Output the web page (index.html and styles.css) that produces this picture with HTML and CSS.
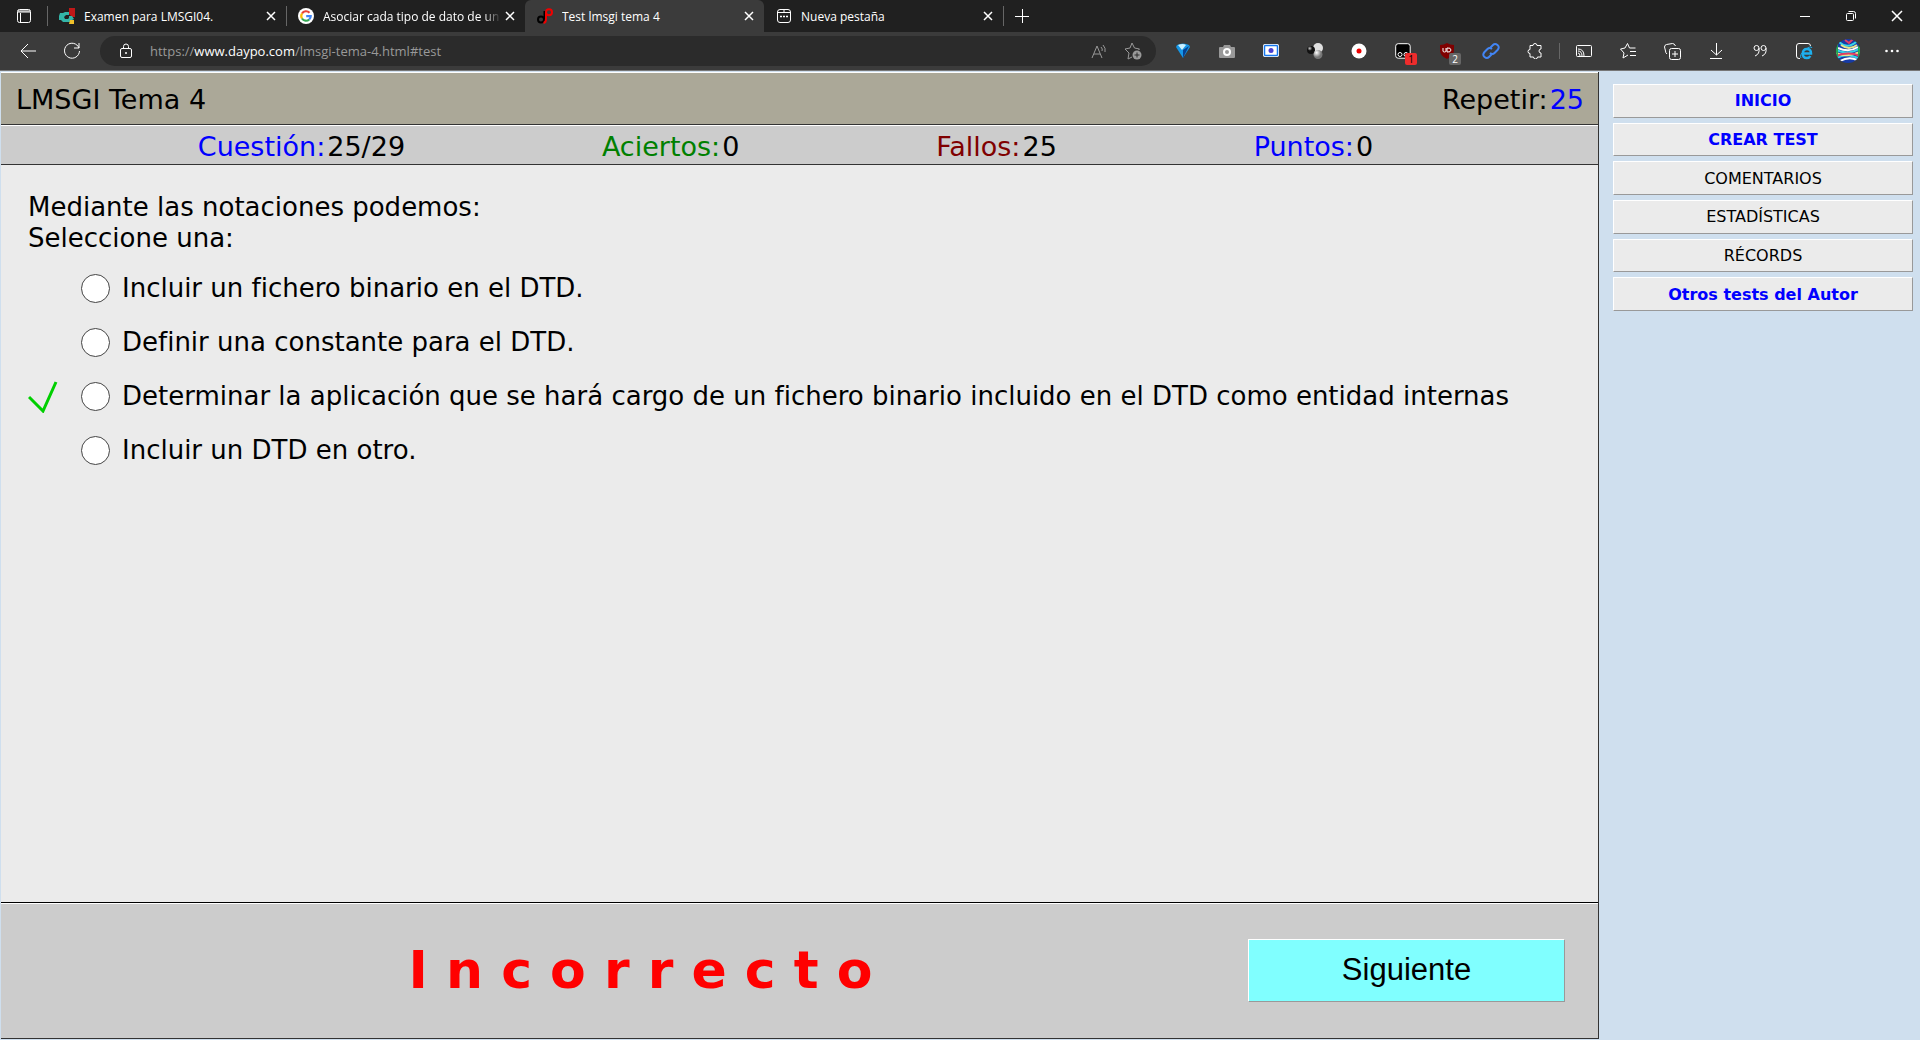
FILE: index.html
```html
<!DOCTYPE html>
<html lang="es">
<head>
<meta charset="utf-8">
<title>Test lmsgi tema 4</title>
<link rel="stylesheet" href="styles.css">
</head>
<body>
<header class="browser">
  <div class="tabstrip">
    <button class="tab-menu" aria-label="Menú de pestañas"><svg width="16" height="16" viewBox="0 0 16 16"><rect x="1.500" y="1.500" width="13" height="13" rx="2" class="line"/><path d="M2 3h12M2 4h12" class="line"/><path d="M4.500 5v9" class="line"/></svg></button>
    <div class="tab">
      <svg class="favicon" width="16" height="16" viewBox="0 0 16 16"><path fill="#c01818" d="M10 0h6v9h-3L10 6z"/><path fill="#33b5a8" d="M1 5h3l2-1h4v3H7l-2 2 1 2h3l1-1V8h3l2 3-2 1-2 2H4l-2-2H0V8z"/><path fill="#f0c02a" d="M11 12h4v4h-5z"/></svg>
      <span class="tab-title">Examen para LMSGI04.</span>
      <button class="close" aria-label="Cerrar"><svg width="10" height="10" viewBox="0 0 10 10"><path d="M1 1l8 8M9 1L1 9" class="line bold"/></svg></button>
    </div>
    <div class="tab">
      <svg class="favicon" width="16" height="16" viewBox="0 0 16 16"><circle cx="8" cy="8" r="8" fill="#fff"/><g fill="none" stroke-width="2.200"><path stroke="#ea4335" d="M4 5.500A4.700 4.700 0 0 1 11.500 4.800"/><path stroke="#fbbc05" d="M4 5.500a4.700 4.700 0 0 0 0 5"/><path stroke="#34a853" d="M4 10.500a4.700 4.700 0 0 0 7.200 1"/><path stroke="#4285f4" d="M11.200 11.500a4.700 4.700 0 0 0 1.500-3.300H8.200"/></g></svg>
      <span class="tab-title fade">Asociar cada tipo de dato de un c</span>
      <button class="close" aria-label="Cerrar"><svg width="10" height="10" viewBox="0 0 10 10"><path d="M1 1l8 8M9 1L1 9" class="line bold"/></svg></button>
    </div>
    <div class="tab active">
      <svg class="favicon" width="16" height="16" viewBox="0 0 16 16"><g fill="none" stroke-width="2"><circle cx="4" cy="11.500" r="3" stroke="#000"/><path stroke="#000" d="M7.500 3v10"/><path stroke="#f00000" d="M6.500 15q2.500-.5 2.500-4V4"/><circle cx="12" cy="4.200" r="3" stroke="#f00000"/></g></svg>
      <span class="tab-title">Test lmsgi tema 4</span>
      <button class="close" aria-label="Cerrar"><svg width="10" height="10" viewBox="0 0 10 10"><path d="M1 1l8 8M9 1L1 9" class="line bold"/></svg></button>
    </div>
    <div class="tab">
      <svg class="favicon" width="16" height="16" viewBox="0 0 16 16"><rect x="1.500" y="1.500" width="13" height="13" rx="2.500" class="line"/><path d="M2 4.500h12M8 4.500V2" class="line"/><path d="M4 8.500h2M7 8.500h2M10 8.500h2" class="line bold"/></svg>
      <span class="tab-title">Nueva pestaña</span>
      <button class="close" aria-label="Cerrar"><svg width="10" height="10" viewBox="0 0 10 10"><path d="M1 1l8 8M9 1L1 9" class="line bold"/></svg></button>
    </div>
    <button class="new-tab" aria-label="Nueva pestaña"><svg width="14" height="14" viewBox="0 0 14 14"><path d="M7.500 0v14M0 7.500h14" class="line"/></svg></button>
    <div class="window-controls">
      <button aria-label="Minimizar"><svg width="12" height="12" viewBox="0 0 12 12"><path d="M1 6.500h10" class="line"/></svg></button>
      <button aria-label="Restaurar"><svg width="12" height="12" viewBox="0 0 12 12"><rect x="1.500" y="3.500" width="7" height="7" rx="1" class="line"/><path d="M3.500 1.500h5q2 0 2 2v5" class="line"/></svg></button>
      <button aria-label="Cerrar ventana"><svg width="12" height="12" viewBox="0 0 12 12"><path d="M1 1l10 10M11 1L1 11" class="line bold"/></svg></button>
    </div>
  </div>
  <div class="toolbar">
    <button class="tool" aria-label="Atrás"><svg width="18" height="18" viewBox="0 0 18 18"><path d="M17 9H2M9 2L2 9l7 7" class="line"/></svg></button>
    <button class="tool" aria-label="Actualizar"><svg width="18" height="18" viewBox="0 0 18 18"><path d="M16 6A7.500 7.500 0 1 0 16.500 9M16 1v5h-5" class="line"/></svg></button>
    <div class="address">
      <svg width="14" height="16" viewBox="0 0 14 16"><rect x="1.500" y="5.500" width="11" height="9" rx="1.500" class="line"/><path d="M4.500 5V3.500a2.500 2.500 0 0 1 5 0V5" class="line"/><circle cx="7" cy="10" r="1" fill="#fff"/></svg>
      <a class="url" href="#test">https://<b>www.daypo.com</b>/lmsgi-tema-4.html#test</a>
      <button aria-label="Leer en voz alta"><svg width="16" height="16" viewBox="0 0 16 16"><path d="M1 15L6 3l5 12M3 11h6M10 4q2 2 1 4M12 2q3 3 2 7" class="line dim"/></svg></button>
      <button aria-label="Agregar a favoritos"><svg width="18" height="18" viewBox="0 0 18 18"><path d="M8 15l-4 2 1-6-4-4 5-1 2-5 2.500 5 5 1-1 1" class="line dim"/><circle cx="13" cy="13" r="4.500" fill="#999"/><path d="M13 10.500v5M10.500 13h5" stroke="#2b2b2b"/></svg></button>
    </div>
    <button class="tool" aria-label="Diamante"><svg width="16" height="16" viewBox="0 0 16 16"><path d="M2 2q6-3 12 0l1 2-7 11L1 4z" fill="#1597e8"/><path d="M3 2q5-2 8 0L7 7z" fill="#c9f0ff"/><path d="M8 7l6-4-6 12z" fill="#07408f"/></svg></button>
    <button class="tool" aria-label="Captura"><svg width="16" height="16" viewBox="0 0 16 16"><path fill="#999" d="M1 4h3l1-2h6l1 2h3q1 0 1 1v9q0 1-1 1H1q-1 0-1-1V5q0-1 1-1z"/><circle cx="8" cy="9" r="3" fill="#999" stroke="#fff" stroke-width="2"/></svg></button>
    <button class="tool" aria-label="Grabar pantalla"><svg width="16" height="16" viewBox="0 0 16 16"><rect y="1" width="16" height="13" rx="2" fill="#fff"/><rect x="1.500" y="2.500" width="13" height="10" rx="1" fill="#fff" stroke="#1677ee" stroke-width="1.500"/><circle cx="8" cy="7.500" r="2.500" fill="#4a3fd0"/></svg></button>
    <button class="tool" aria-label="Esferas"><svg width="16" height="16" viewBox="0 0 16 16"><defs><radialGradient id="ball" cx=".35" cy=".3"><stop offset="0" stop-color="#fff"/><stop offset="1" stop-color="#777"/></radialGradient><radialGradient id="dark" cx=".35" cy=".3"><stop offset="0" stop-color="#ccc"/><stop offset=".6" stop-color="#111"/></radialGradient></defs><circle cx="11" cy="5" r="5" fill="#e0e0e0"/><circle cx="4" cy="7" r="4" fill="url(#dark)"/><circle cx="11" cy="11.500" r="4.500" fill="url(#ball)"/></svg></button>
    <button class="tool" aria-label="Grabadora"><svg width="16" height="16" viewBox="0 0 16 16"><circle cx="8" cy="8" r="7.500" fill="#fff"/><circle cx="8" cy="8" r="2.500" fill="#e00"/></svg></button>
    <button class="tool" aria-label="Tampermonkey"><svg width="16" height="16" viewBox="0 0 16 16"><rect x=".7" y=".7" width="14.500" height="14.500" rx="2.500" fill="#000" stroke="#fff"/><circle cx="5" cy="11.500" r="2" fill="#000" stroke="#fff"/><circle cx="11" cy="11.500" r="2" fill="#000" stroke="#fff"/></svg><span class="badge red">1</span></button>
    <button class="tool" aria-label="uBlock"><svg width="16" height="16" viewBox="0 0 16 16"><path fill="#800000" d="M8 0q3 2 7 2v5q0 6-7 9-7-3-7-9V2q4 0 7-2z"/><path d="M4 5v3q0 1 1.500 1T7 8V5M8 9V5q4-.5 4 2t-4 2" class="line"/></svg><span class="badge">2</span></button>
    <button class="tool" aria-label="Enlaces"><svg width="18" height="18" viewBox="0 0 18 18"><g fill="none" stroke="#4285f4" stroke-width="2"><path d="M8 6l3-3q2-2 4.500 0t0 5l-3 3q-2 2-4.500 0"/><path d="M10 12l-3 3q-2 2-4.500 0t0-5l3-3q2-2 4.500 0"/></g></svg></button>
    <button class="tool" aria-label="Extensiones"><svg width="16" height="16" viewBox="0 0 16 16"><path d="M3 2.500h3a2 2 0 0 1 4 0h4v3.500a2 2 0 0 0 0 4v4h-3.500a2 2 0 0 1-4 0H3v-3.500a2 2 0 0 1 0-4z" class="line"/></svg></button>
    <span class="divider"></span>
    <button class="tool" aria-label="Transmitir"><svg width="16" height="16" viewBox="0 0 16 16"><rect x=".5" y="2.500" width="15" height="11" rx="1" class="line"/><path d="M2 10q2 0 2 3M2 8q4 0 4 5M2 6q6 0 6 7" class="line"/></svg></button>
    <button class="tool" aria-label="Favoritos"><svg width="16" height="16" viewBox="0 0 16 16"><path d="M8 12l-5 3 1-5-3.500-4L5 5l2.500-4.500L9.500 5h6M10 8.500h6M10 12.500h6" class="line"/></svg></button>
    <button class="tool" aria-label="Colecciones"><svg width="17" height="17" viewBox="0 0 17 17"><rect x="5.500" y="5.500" width="11" height="11" rx="2" class="line"/><path d="M11 8v6M8 11h6M3 11Q1.500 10 1.500 8L.5 4q0-2 2-2.500l6-1q2 0 3 2.500" class="line"/></svg></button>
    <button class="tool" aria-label="Descargas"><svg width="14" height="16" viewBox="0 0 14 16"><path d="M7.500 0v12M2 7l5.500 5L13 7M1 15.500h12" class="line"/></svg></button>
    <button class="tool" aria-label="Citar"><svg width="14" height="14" viewBox="0 0 14 14"><g class="line"><circle cx="3.500" cy="4" r="2.500"/><path d="M6 4q1 6-4 8"/><circle cx="10.500" cy="4" r="2.500"/><path d="M13 4q1 6-4 8"/></g></svg></button>
    <button class="tool" aria-label="Modo Internet Explorer"><svg width="17" height="17" viewBox="0 0 17 17"><path d="M4 15.500H3q-2.500 0-2.500-2.500V3Q.5 .5 3 .5h9q2.500 0 2.500 2.500" class="line"/><g fill="none" stroke="#1eb0ee"><path stroke-width="2.500" d="M6.500 10.500H15q0-4.500-4-4.500t-4.200 4.500 4 4.500q2.500 0 3.500-2"/><path d="M5 15Q3 12 9 7t7-2"/></g></svg></button>
    <button class="tool" aria-label="Perfil"><svg width="24" height="24" viewBox="0 0 24 24"><clipPath id="face"><circle cx="12" cy="12" r="12"/></clipPath><g clip-path="url(#face)" fill="none" stroke-width="2"><path fill="#173ba5" d="M0 0h24v24H0z"/><path stroke="#35d3e8" d="M3 3q9 8 18-1M0 11q12 6 24-2M1 19q9-6 23 1"/><path stroke="#e9e58a" d="M5 6q8 6 16 0M0 14q12 5 24-1"/><path stroke="#e13d64" d="M0 17q13-5 24 0M9 1l4 3 4-4"/><path stroke="#fff" d="M2 9q11 5 20-1M4 22q9-5 17-1"/><path stroke="#22a851" d="M1 5v13M23 7v11"/></g></svg></button>
    <button class="tool" aria-label="Más"><svg width="16" height="4" viewBox="0 0 16 4"><g fill="#fff"><circle cx="2.500" cy="2" r="1.300"/><circle cx="8" cy="2" r="1.300"/><circle cx="13.500" cy="2" r="1.300"/></g></svg></button>
  </div>
</header>
<div class="page">
  <main class="quiz">
    <div class="bar title"><span>LMSGI Tema 4</span><span class="pair">Repetir: <span class="blue">25</span></span></div>
    <div class="bar score">
      <span class="pair"><span class="blue">Cuestión:</span><span>25/29</span></span>
      <span class="pair"><span class="green">Aciertos:</span><span>0</span></span>
      <span class="pair"><span class="maroon">Fallos:</span><span>25</span></span>
      <span class="pair"><span class="blue">Puntos:</span><span>0</span></span>
    </div>
    <fieldset class="question">
      <legend>Mediante las notaciones podemos:<br>Seleccione una:</legend>
      <div class="option"><input type="radio" name="r" id="r1"><label for="r1">Incluir un fichero binario en el DTD.</label></div>
      <div class="option"><input type="radio" name="r" id="r2"><label for="r2">Definir una constante para el DTD.</label></div>
      <div class="option"><svg class="check" width="30" height="32" viewBox="0 0 30 32"><path d="M1 16l14 14L28 1" fill="none" stroke="#00cf00" stroke-width="3"/></svg><input type="radio" name="r" id="r3"><label for="r3">Determinar la aplicación que se hará cargo de un fichero binario incluido en el DTD como entidad internas</label></div>
      <div class="option"><input type="radio" name="r" id="r4"><label for="r4">Incluir un DTD en otro.</label></div>
    </fieldset>
    <div class="result"><strong>I n c o r r e c t o</strong><button class="next">Siguiente</button></div>
  </main>
  <nav class="side">
    <a class="strong" href="#inicio">INICIO</a>
    <a class="strong" href="#crear">CREAR TEST</a>
    <a href="#comentarios">COMENTARIOS</a>
    <a href="#estadisticas">ESTADÍSTICAS</a>
    <a href="#records">RÉCORDS</a>
    <a class="strong" href="#autor">Otros tests del Autor</a>
  </nav>
</div>
</body>
</html>
```

FILE: styles.css
```css
* { box-sizing: border-box; }
body { margin: 0; min-height: 100vh; display: flex; flex-direction: column; background: #cfdfee; color: #000; font-family: Verdana, "DejaVu Sans", sans-serif; font-size: 27px; }
button { border: 0; padding: 0; background: none; display: flex; align-items: center; justify-content: center; font: inherit; }
a { color: inherit; text-decoration: none; }
.browser { font-family: "Segoe UI", "Open Sans", sans-serif; font-size: 12px; color: #fff; background: #3b3b3b; border-bottom: 1px solid #777; }
.line { fill: none; stroke: #fff; }
.bold { stroke-width: 1.5; }
.dim { stroke: #999; }
.tabstrip { display: flex; height: 32px; background: #202020; }
.tab-menu { width: 47px; }
.tab { width: 239px; display: flex; align-items: center; padding: 0 10px 0 12px; position: relative; }
.tab::before { content: ""; position: absolute; left: 0; top: 6px; height: 20px; border-left: 1px solid #666; }
.tab.active { background: #3b3b3b; border-radius: 6px 6px 0 0; }
.tab.active::before, .tab.active + .tab::before { display: none; }
.tab-title { flex: 1; margin: 0 4px 0 9px; white-space: nowrap; overflow: hidden; }
.fade { -webkit-mask-image: linear-gradient(90deg, #000 90%, transparent); mask-image: linear-gradient(90deg, #000 90%, transparent); }
.close { width: 10px; }
.new-tab { width: 36px; margin: 6px 0; border-left: 1px solid #666; }
.window-controls { margin-left: auto; display: flex; }
.window-controls button { width: 46px; }
.toolbar { height: 38px; display: flex; align-items: center; padding: 0 6px; }
.tool { width: 44px; height: 30px; position: relative; }
.badge { position: absolute; left: 24px; top: 17px; width: 12px; height: 12px; border-radius: 2px; background: #666; font-size: 10px; line-height: 12px; text-align: center; color: #fff; }
.badge.red { background: #ee2c2c; color: #000; }
.divider { width: 1px; height: 16px; margin: 0 2px; background: #666; }
.address { flex: 1; height: 30px; margin: 0 5px 0 6px; padding: 0 14px 0 19px; display: flex; align-items: center; gap: 17px; border-radius: 15px; background: #2b2b2b; font-size: 13px; }
.url { flex: 1; color: #999; }
.url b { font-weight: 400; color: #fff; }
.page { flex: 1; display: flex; padding: 1px 0 1px 1px; }
.quiz { flex: 1; display: flex; flex-direction: column; border-right: 1px solid #333; line-height: 31px; }
.bar { display: flex; align-items: center; border-top: 1px solid #fff; border-bottom: 1px solid #333; }
.title { height: 53px; padding: 2px 14px 0 15px; justify-content: space-between; background: #aba898; }
.score { height: 40px; padding: 2px 28px 0 0; justify-content: space-evenly; background: #ccc; }
.pair { display: flex; gap: 2px; }
.blue { color: #00f; }
.green { color: #008000; }
.maroon { color: #800000; }
.question { flex: 1; margin: 0; border: 0; padding: 27px 27px 0; background: #ebebeb; font-size: 26px; }
legend { float: left; width: 100%; padding: 0; margin-bottom: 7px; }
.option { clear: both; height: 54px; display: flex; align-items: center; padding-left: 53px; position: relative; }
.option input { appearance: none; width: 29px; height: 29px; margin: 0 12px 0 0; border: 1px solid #444; border-radius: 50%; background: #fff; }
.check { position: absolute; left: 0; top: 12px; }
.result { height: 136px; display: flex; align-items: center; background: #ccc; border-top: 1px solid #fff; border-bottom: 1px solid #333; box-shadow: 0 -1px #000; padding: 0 33px 2px 0; }
.result strong { flex: 1; padding-left: 32px; text-align: center; font-size: 52px; line-height: 60px; color: #f00; }
.next { width: 317px; height: 63px; background: #80ffff; border: 1px solid; border-color: #fff #999 #999 #fff; font: 31px Arial, "Liberation Sans", sans-serif; color: #000; }
.side { width: 321px; height: 239px; padding: 12px 7px 0 14px; display: grid; grid-template-rows: repeat(6, 1fr); gap: 5px; font-size: 16px; }
.side a { display: flex; align-items: center; justify-content: center; background: #ebebeb; border: 1px solid; border-color: #fff #999 #999 #fff; }
.side .strong { color: #00f; font-weight: 700; }
```
